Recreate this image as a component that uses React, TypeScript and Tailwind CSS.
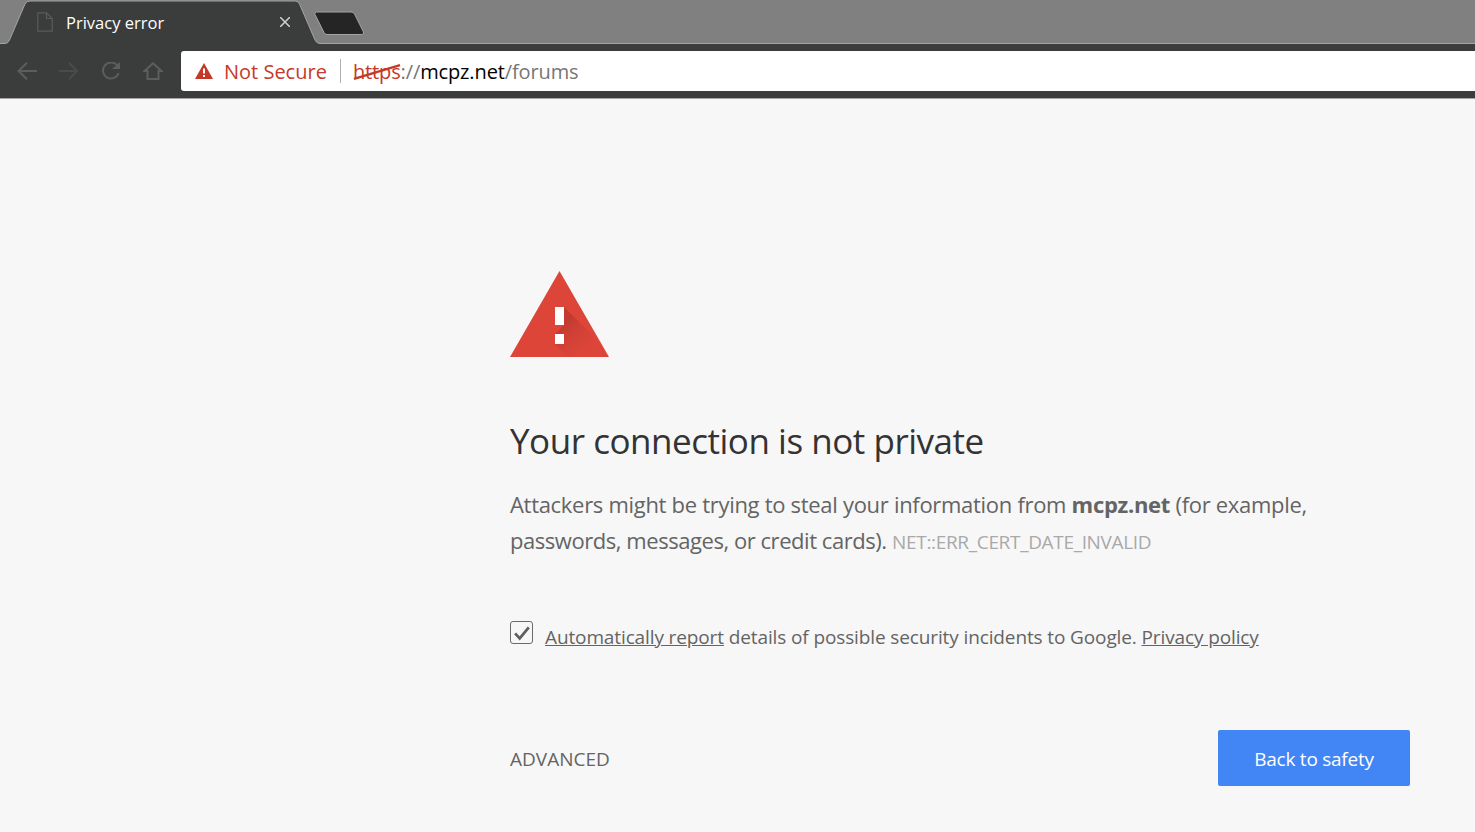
import React from 'react'

function Triangle({ className }: { className: string }) {
  return (
    <svg viewBox="0 0 99 86" className={className}>
      <defs>
        <linearGradient id="fold" x1="0.25" y1="0.25" x2="0.8" y2="0.8">
          <stop offset="0" stopColor="#b5352b" stopOpacity="0.65" />
          <stop offset="0.55" stopColor="#c73c31" stopOpacity="0.3" />
          <stop offset="1" stopColor="#db4437" stopOpacity="0" />
        </linearGradient>
      </defs>
      <path d="M49.5 0 L99 86 H0 Z" fill="#dd4539" />
      <path d="M54 36 L92.8 74.8 L99 86 H58 L45 73 V63 L54 54 Z" fill="url(#fold)" />
      <path d="M45 36 H54 V54 H45 Z M45 63 H54 V73 H45 Z" fill="#fff" />
    </svg>
  )
}

function BackIcon() {
  return (
    <svg viewBox="0 0 20 18" className="w-[20px] h-[18px]" fill="none" stroke="#5c5d5d" strokeWidth="2">
      <path d="M1.5 9 H20 M10 0.8 L1.5 9 L10 17.2" />
    </svg>
  )
}

function ForwardIcon() {
  return (
    <svg viewBox="0 0 20 18" className="w-[20px] h-[18px]" fill="none" stroke="#4a4b4b" strokeWidth="2">
      <path d="M0 9 H18 M10 0.8 L18 9 L10 17.2" />
    </svg>
  )
}

function ReloadIcon() {
  return (
    <svg viewBox="0 0 20 18" className="w-[20px] h-[18px]" fill="none">
      <path d="M16 3.2 A8 8 0 1 0 17.6 11" stroke="#5c5d5d" strokeWidth="2" />
      <path d="M11 7 H19 V0 Z" fill="#5c5d5d" />
    </svg>
  )
}

function HomeIcon() {
  return (
    <svg viewBox="0 0 20 18" className="w-[20px] h-[18px]" fill="none" stroke="#5c5d5d" strokeWidth="2">
      <path d="M10 1.2 L1.5 9 H4.5 V17 H15.5 V9 H18.5 Z" />
    </svg>
  )
}

export default function App() {
  return (
    <div className="w-[1475px] h-[832px] overflow-hidden bg-[#f7f7f7] font-['Open_Sans','Noto_Sans',sans-serif] flex flex-col">
      {/* Browser chrome */}
      <div className="h-[99px] shrink-0 flex flex-col bg-[#3b3c3c] border-b border-[#a4a4a4]">
        <div className="relative h-[44px] shrink-0 bg-[#808080] border-b border-[#a4a4a4]">
          <svg viewBox="0 0 380 45" className="absolute top-0 left-0 w-[380px] h-[45px]">
            <path d="M-2 43.5 H5 Q8 43.5 9.5 40 L25 4 Q26.5 1 30 1 H295 Q298 1 299.5 4 L315 40 Q316.5 43.5 320 43.5 V45 H-2 Z" fill="#3b3c3c" />
            <path d="M-2 43.5 H5 Q8 43.5 9.5 40 L25 4 Q26.5 1 30 1 H295 Q298 1 299.5 4 L315 40 Q316.5 43.5 320 43.5" fill="none" stroke="#a4a4a4" />
            <path d="M316.5 12 H351 Q353.5 12 354.5 14 L363.5 32 Q364.5 34.5 361.5 34.5 H327 Q325 34.5 324 32.5 L315 14.5 Q314 12 316.5 12 Z" fill="#252525" stroke="#a4a4a4" />
          </svg>
          <div className="relative flex items-center h-[44px] pl-[37px] w-[290px]">
            <svg viewBox="0 0 16 20" className="w-[16px] h-[20px]" fill="none" stroke="#5a5b5b" strokeWidth="1.2">
              <path d="M0.8 0.8 H9.5 L15.2 6.5 V19.2 H0.8 Z M9.5 0.8 V6.5 H15.2" />
            </svg>
            <span className="ml-[13px] pt-[2px] text-[16.5px] text-white leading-none">Privacy error</span>
            <svg viewBox="0 0 10 10" className="ml-auto w-[10px] h-[10px]" stroke="#d2d2d2" strokeWidth="1.5">
              <path d="M0 0 L10 10 M10 0 L0 10" />
            </svg>
          </div>
        </div>
        <div className="flex items-center flex-1 pl-[17px]">
          <div className="flex items-center w-[164px] shrink-0 gap-[22px]">
            <BackIcon />
            <ForwardIcon />
            <ReloadIcon />
            <HomeIcon />
          </div>
          <div className="flex items-center h-[40px] flex-1 bg-white rounded-l-[3px] pl-[14px] text-[20px]">
            <svg viewBox="0 0 18 16" className="w-[18px] h-[16px] shrink-0">
              <path d="M9 0 L18 16 H0 Z" fill="#c53929" />
              <path d="M8 5.5 H10 V10.5 H8 Z M8 12 H10 V14 H8 Z" fill="#fff" />
            </svg>
            <span className="ml-[11px] pt-[1px] text-[#c53929]">Not Secure</span>
            <span className="ml-[13px] w-px h-[24px] bg-[#b0b0b0]" />
            <span className="flex items-center ml-[12px] pt-[1px] tracking-[-0.12px]">
              <span className="relative text-[#c53929]">
                https
                <svg viewBox="0 0 50 20" className="absolute left-0 top-[5px] w-[49px] h-[20px]">
                  <path d="M1 17 L48 3" stroke="#c53929" strokeWidth="2.4" />
                </svg>
              </span>
              <span className="text-[#767676]">://</span>
              <span className="text-black">mcpz.net</span>
              <span className="text-[#767676]">/forums</span>
            </span>
          </div>
        </div>
      </div>

      {/* Interstitial */}
      <main className="flex flex-col pl-[510px] pr-[65px] pt-[172px]">
        <Triangle className="w-[99px] h-[86px]" />
        <h1 className="mt-[62px] text-[35px] leading-[44px] text-[#333333] tracking-[-0.47px]">Your connection is not private</h1>
        <p className="mt-[23px] text-[22px] leading-[36px] text-[#646464] tracking-[-0.3px]">
          Attackers might be trying to steal your information from <b>mcpz.net</b> (for example,
          <br />
          <span className="tracking-[-0.45px]">passwords, messages, or credit cards).</span> <span className="text-[19px] text-[#a9a9a9] tracking-[-0.33px]">NET::ERR_CERT_DATE_INVALID</span>
        </p>
        <div className="mt-[61px] flex items-start text-[19px] text-[#646464] tracking-[-0.12px]">
          <span className="flex items-center justify-center w-[23px] h-[23px] border border-[#6a6a6a] rounded-[3px]">
            <svg viewBox="0 0 23 23" className="w-[23px] h-[23px]" fill="none" stroke="#5f5f5f" strokeWidth="3">
              <path d="M4.5 12.5 L9.5 18 L19.5 6" />
            </svg>
          </span>
          <p className="ml-[12px] leading-[32px]">
            <u>Automatically report</u> details of possible security incidents to Google. <u>Privacy policy</u>
          </p>
        </div>
        <div className="mt-[77px] flex items-center justify-between">
          <span className="pt-[2px] text-[19px] text-[#646464]">ADVANCED</span>
          <button className="w-[192px] h-[56px] pt-[2px] bg-[#4285f4] rounded-[2px] text-white text-[19px] tracking-[-0.25px]">Back to safety</button>
        </div>
      </main>
    </div>
  )
}
